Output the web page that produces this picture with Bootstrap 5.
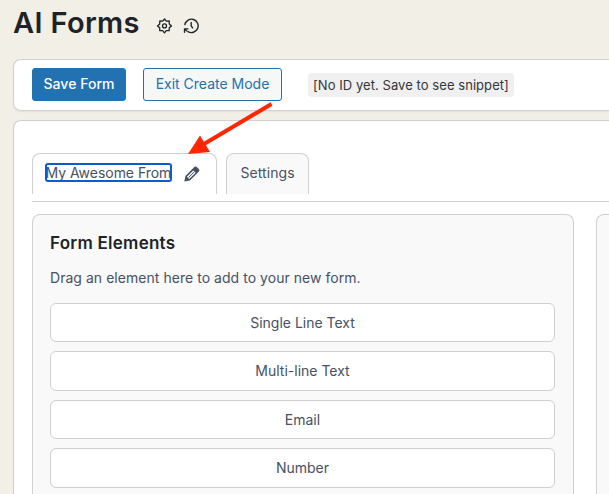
<!DOCTYPE html>
<html lang="en">
<head>
<meta charset="utf-8">
<title>AI Forms</title>
<link href="https://cdn.jsdelivr.net/npm/bootstrap@5.3.0/dist/css/bootstrap.min.css" rel="stylesheet">
<style>
body{font-family:Inter,"Liberation Sans",sans-serif;font-size:14px;line-height:20px;color:#475163;background:#f2efe7}
.app-shell{padding-left:13px}
.app-head{height:59px}
.app-title{font-size:29px;line-height:36px;font-weight:600;color:#1d2327;margin:5px 0 0;width:143px;letter-spacing:.35px;white-space:nowrap}
.head-icon{margin-top:18px;color:#1d2327}
.head-icon + .head-icon{margin-left:10px}
.panel{background:#fff;border:1px solid #ced0d4;border-right:0;border-radius:8px 0 0 8px;box-shadow:0 1px 2px rgba(0,0,0,.06)}
.toolbar{height:52px;padding:8px 0 8px 18px}
.tool-btn{height:33px;border-radius:3px;font-size:14px;line-height:20px;padding:0 0 2px;white-space:nowrap}
.save-btn,.save-btn:hover{width:94px;background:#2271b1;border-color:#2271b1;color:#fff;font-weight:500;letter-spacing:.02px}
.exit-btn,.exit-btn:hover{width:139px;margin-left:17px;background:#f6f7f7;border-color:#2271b1;color:#2271b1}
.snippet{margin:5px 0 0 26px;width:206px;height:24px;background:#f0f0f0;border-radius:4px;color:#32373c;font-size:13px;line-height:24px;padding-left:5px;letter-spacing:.06px;white-space:nowrap}
.editor{margin-top:9px;padding:32px 0 0 18px;border-bottom:0;border-radius:8px 0 0 0}
.tabs{height:49px;gap:9px;border-bottom:1px solid #ced0d4}
.tab-box{height:41px;border:1px solid #ced0d4;border-bottom:0;border-radius:8px 8px 0 0}
.tab-main{width:185px;padding-left:12px}
.tab-name{width:127px;height:19px;margin-top:9px;border:2px solid #0a5cd0;border-radius:3px;line-height:16px;white-space:nowrap;overflow:hidden}
.tab-name span{margin-left:-1.5px;letter-spacing:-.03px}
.edit-icon{margin:12px 0 0 12px;color:#475163}
.tab-settings{width:83px;background:#f9f9f9;text-align:center;line-height:38px;letter-spacing:.08px}
.boards{gap:22px;margin-top:12px}
.board{background:#f9f9f9;border:1px solid #ced0d4;border-bottom:0;border-radius:8px 8px 0 0;padding:17px 18px 0 17px}
.board-source{width:542px}
.board-target{border-right:0;border-radius:8px 0 0 0;padding:0}
.board h2{font-size:17px;line-height:22px;font-weight:600;color:#1d2327;margin:0 0 14px;letter-spacing:.25px}
.board p{margin:0 0 15px;white-space:nowrap;letter-spacing:.04px}
.elements{gap:9px}
.element{height:39.4px;flex:none;background:#fff;border:1px solid #ced0d4;border-radius:6px;line-height:37px;text-align:center}
.pointer{left:180px;top:96px}
</style>
<script src="https://cdn.jsdelivr.net/npm/bootstrap@5.3.0/dist/js/bootstrap.bundle.min.js"></script>
</head>
<body class="overflow-hidden position-relative">
<div class="app-shell d-flex flex-column vh-100 overflow-hidden">
<header class="app-head d-flex flex-shrink-0">
<h1 class="app-title">AI Forms</h1>
<svg class="head-icon" width="17" height="17" viewBox="0 0 17 17" fill="none" stroke="currentColor" stroke-width="1.3" stroke-linejoin="round"><path d="M8.5 1L10.3 3.2L13.2 3L13.3 5.9L15.5 7.9L13.3 9.8L13.2 12.7L10.3 12.6L8.5 14.8L6.7 12.6L3.8 12.7L3.7 9.8L1.5 7.9L3.7 5.9L3.8 3L6.7 3.2Z"/><circle cx="8.5" cy="7.9" r="2"/></svg>
<svg class="head-icon" width="17" height="17" viewBox="0 0 17 17" fill="none" stroke="currentColor" stroke-width="1.35" stroke-linecap="round" stroke-linejoin="round"><path d="M1.9 6.5A6.7 6.7 0 1 1 5 13.6M1.5 14.3V10.9H4.9M1.7 11L3.8 12.9M8.2 4.5V7.8L9.6 9.9"/></svg>
</header>
<div class="panel toolbar d-flex flex-shrink-0">
<button type="button" class="btn tool-btn save-btn">Save Form</button>
<button type="button" class="btn tool-btn exit-btn">Exit Create Mode</button>
<div class="snippet">[No ID yet. Save to see snippet]</div>
</div>
<main class="panel editor d-flex flex-column flex-grow-1">
<div class="tabs d-flex flex-shrink-0">
<div class="tab-box tab-main d-flex"><div class="tab-name"><span>My Awesome From</span></div>
<svg class="edit-icon" width="16" height="16" viewBox="0 0 16 16"><path fill="currentColor" fill-rule="evenodd" d="M.3 15.5L1.4 10L10.3 1.1Q11.5.1 12.7 1L14.9 3.1Q16 4.3 14.9 5.5L5.9 14.4ZM2.9 10.8L5.2 13.1L11.6 6.7L9.3 4.4Z"/><path d="M4.4 11.7L10.3 5.8" stroke="currentColor" stroke-width="1"/></svg></div>
<div class="tab-box tab-settings">Settings</div>
</div>
<div class="boards d-flex flex-grow-1">
<section class="board board-source flex-shrink-0"><h2>Form Elements</h2><p>Drag an element here to add to your new form.</p>
<div class="elements d-flex flex-column"><div class="element">Single Line Text</div><div class="element">Multi-line Text</div><div class="element">Email</div><div class="element">Number</div></div></section>
<section class="board board-target flex-grow-1"></section>
</div>
</main>
</div>
<svg class="pointer position-absolute" width="100" height="62" viewBox="180 96 100 62"><path d="M271.5 104L204 144" stroke="#ff2600" stroke-width="4"/><path d="M188 154L200 135.5L210 152Z" fill="#ff2600"/></svg>
</body>
</html>
